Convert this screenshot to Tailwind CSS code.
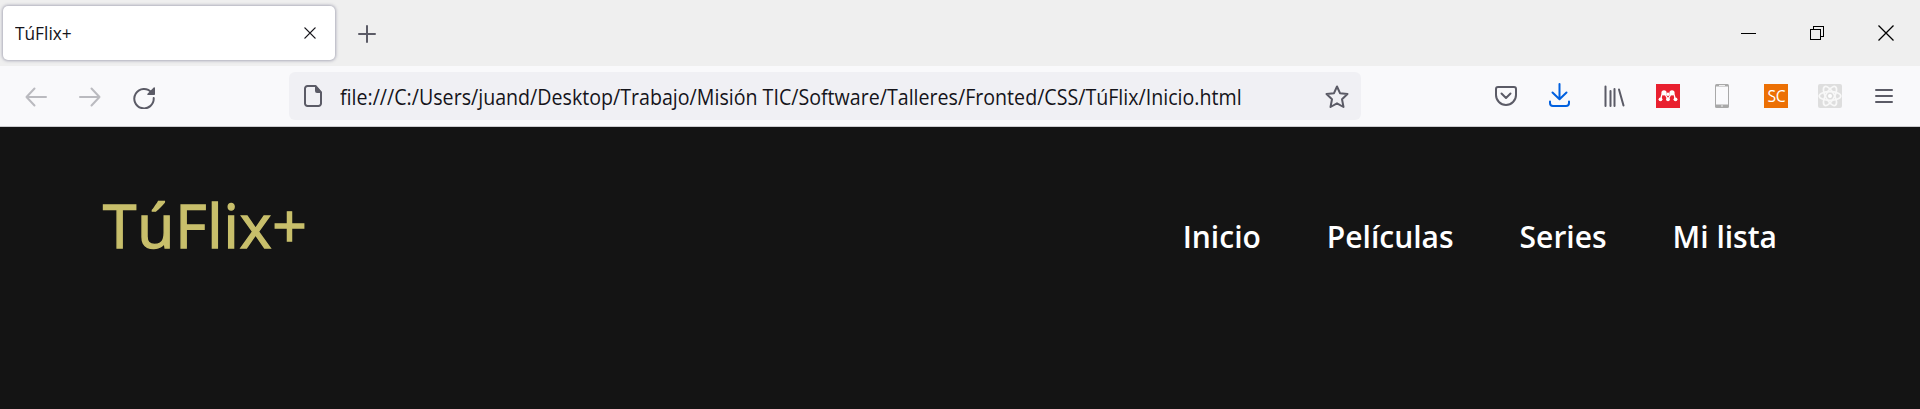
<!DOCTYPE html>
<html lang="es">
<head>
<meta charset="utf-8">
<title>TúFlix+</title>
<script src="https://cdn.jsdelivr.net/npm/@tailwindcss/browser@4"></script>
</head>
<body class="w-[1920px] h-[409px] overflow-hidden bg-[#141414] font-['Open_Sans',sans-serif] flex flex-col">
  <div class="h-[66px] shrink-0 bg-[#efefef] flex items-center">
    <div class="ml-[3px] w-[332px] h-[54px] rounded-[5px] bg-white shadow-[0_0_3px_1px_rgba(110,110,135,0.5)] flex items-center justify-between pl-[12px] pr-[19px]">
      <span class="text-[18px] leading-6 text-[#15141a] origin-left scale-x-[0.96] whitespace-nowrap">TúFlix+</span>
      <svg class="size-3" viewBox="0 0 12 12" fill="none" stroke="#15141a" stroke-width="1.3" stroke-linecap="round"><path d="M.9.9l10.2 10.2M11.1.9L.9 11.1"/></svg>
    </div>
    <svg class="ml-[23px] mt-[2px] size-[18px]" viewBox="0 0 18 18" fill="none" stroke="#5b5b66" stroke-width="2" stroke-linecap="round"><path d="M9 1v16M1 9h16"/></svg>
    <div class="ml-auto flex items-center pr-[26px]">
      <svg class="w-[15px] h-[15px]" viewBox="0 0 15 15" shape-rendering="crispEdges"><path d="M0 7h15v1H0z"/></svg>
      <svg class="ml-[54px] size-[14px]" viewBox="0 0 14 14" fill="none" stroke="#000" shape-rendering="crispEdges"><path d="M.5 3.5h10v10H.5zM3.500 3V.5h10v10H11"/></svg>
      <svg class="ml-[54px] size-[16px]" viewBox="0 0 16 16" fill="none" stroke="#000" stroke-width="1.3"><path d="M.5.5l15 15M15.500.5l-15 15"/></svg>
    </div>
  </div>
  <div class="h-[61px] shrink-0 bg-[#f9f9fb] border-b border-[#cccccf] flex items-center">
    <svg class="ml-[25px] mt-[2px] w-[22px] h-[20px]" viewBox="0 0 22 20" fill="none" stroke="#bababf" stroke-width="2" stroke-linecap="round" stroke-linejoin="round"><path d="M21 10H1.500M9.500 1.500L1.500 10l8 8.500"/></svg>
    <svg class="ml-[32px] mt-[2px] w-[22px] h-[20px]" viewBox="0 0 22 20" fill="none" stroke="#bababf" stroke-width="2" stroke-linecap="round" stroke-linejoin="round"><path d="M1 10h19.500M12.500 1.500l8 8.500-8 8.500"/></svg>
    <svg class="ml-[32px] mt-[4px] size-[22px]" viewBox="0 0 22 22" fill="none"><path d="M18.500 5.500A9.700 9.700 0 1 0 20.700 11" stroke="#5b5b66" stroke-width="2" stroke-linecap="round"/><path d="M22 1v6.200a.8.800 0 0 1-.8.800H15c-.7 0-1-.8-.5-1.300L20.700.5c.5-.5 1.300-.2 1.300.5z" fill="#5b5b66"/></svg>
    <div class="ml-[134px] w-[1072px] h-[48px] rounded-[6px] bg-[#f0f0f4] flex items-center pl-[15px] pr-[12px]">
      <svg class="w-[18px] h-[22px] shrink-0" viewBox="0 0 18 22" fill="none"><path d="M11.500 1H3.500A2.500 2.500 0 0 0 1 3.500v15A2.500 2.500 0 0 0 3.500 21h11a2.500 2.500 0 0 0 2.500-2.500V7.500z" stroke="#5b5b66" stroke-width="2" stroke-linejoin="round"/><path d="M11 1h1l5.500 5.800V8H13a2 2 0 0 1-2-2z" fill="#5b5b66"/></svg>
      <span class="ml-[18px] mt-[2px] w-[960px] text-[21.500px] leading-8 text-[#15141a] origin-left scale-x-[0.9125] whitespace-nowrap">file:///C:/Users/juand/Desktop/Trabajo/Misión TIC/Software/Talleres/Fronted/CSS/TúFlix/Inicio.html</span>
      <svg class="ml-auto mt-[1px] size-[24px] shrink-0" viewBox="0 0 24 24" fill="none" stroke="#5b5b66" stroke-width="2" stroke-linejoin="round"><path d="M12 1.500l3 6.700 7.500.8-5.500 5.200 1.500 7.800-6.500-3.700L5.500 22 7 14.200 1.500 9 9 8.200z"/></svg>
    </div>
    <div class="ml-auto pr-[27px] flex items-center">
      <svg class="w-[22px] h-[20px]" viewBox="0 0 22 20" fill="none" stroke="#5b5b66" stroke-width="2" stroke-linecap="round" stroke-linejoin="round"><path d="M3 1h16a2 2 0 0 1 2 2v6a10 10 0 0 1-20 0V3a2 2 0 0 1 2-2zM6.500 7.500L11 12l4.500-4.500"/></svg>
      <svg class="ml-[32px] mb-[2px] w-[21px] h-[24px]" viewBox="0 0 21 24" fill="none" stroke="#0060df" stroke-width="2" stroke-linecap="round" stroke-linejoin="round"><path d="M10.500 1v15M3.500 9.500l7 6.800 7-6.800M1 18.500V20a3 3 0 0 0 3 3h13a3 3 0 0 0 3-3v-1.500"/></svg>
      <svg class="ml-[34px] w-[21px] h-[22px]" viewBox="0 0 21 22" fill="none" stroke="#5b5b66" stroke-width="2" stroke-linecap="round"><path d="M1.500 1.500v19.500M6.500 6v15M10.500 4v17M15 4.500l4.500 16"/></svg>
      <svg class="ml-[31px] size-[24px]" viewBox="0 0 24 24"><path fill="#e9202f" d="M0 0h24v24H0z"/><g fill="#fff"><circle cx="8" cy="8.800" r="2.600"/><circle cx="16" cy="8.800" r="2.600"/><circle cx="12" cy="10.200" r="1.700"/><circle cx="4.500" cy="15.300" r="1.900"/><circle cx="12" cy="15.300" r="1.900"/><circle cx="19.500" cy="15.300" r="1.900"/></g><path d="M7.500 8.500Q5.500 10 5 15M16.500 8.500q2 1.500 2.500 6.500M8.500 9l3 5.500M15.500 9l-3 5.500" stroke="#fff" stroke-width="1.400" fill="none"/></svg>
      <svg class="ml-[35px] w-[14px] h-[24px]" viewBox="0 0 14 24"><rect width="14" height="24" rx="1.500" fill="#a9a9a9"/><path d="M1 2.500h12v18H1z" fill="#fafafc"/><path d="M4 1.500h6M6 22h2" stroke="#eee" stroke-width="1"/></svg>
      <div class="ml-[35px] size-[24px] bg-[#ec7004] text-white text-[16.500px] leading-6 flex justify-center tracking-[-0.300px]"><span class="scale-x-95">SC</span></div>
      <svg class="ml-[30px] size-[24px]" viewBox="0 0 24 24" fill="none" stroke="#f8f8f8" stroke-width="1.700"><rect width="24" height="24" rx="2" fill="#dedede" stroke="none"/><ellipse cx="12" cy="12" rx="10.800" ry="4.300"/><ellipse cx="12" cy="12" rx="10.800" ry="4.300" transform="rotate(60 12 12)"/><ellipse cx="12" cy="12" rx="10.800" ry="4.300" transform="rotate(120 12 12)"/><circle cx="12" cy="12" r="2" fill="#fff" stroke="none"/></svg>
      <svg class="ml-[33px] mb-px w-[18px] h-[16px]" viewBox="0 0 18 16" stroke="#5b5b66" stroke-width="2" stroke-linecap="round"><path d="M1 2h16M1 8h16M1 14h16"/></svg>
    </div>
  </div>
  <header class="flex items-baseline justify-between pl-[103px] pr-[143px] pt-[55px] whitespace-nowrap">
    <h1 class="text-[60.500px] leading-[86px] tracking-[0.900px] [-webkit-text-stroke:1.400px_#c8bf6b] text-[#c8bf6b]">TúFlix+</h1>
    <nav class="flex gap-[66px] text-[30px] leading-[40px] font-semibold text-white">
      <a>Inicio</a><a>Películas</a><a>Series</a><a>Mi lista</a>
    </nav>
  </header>
</body>
</html>
